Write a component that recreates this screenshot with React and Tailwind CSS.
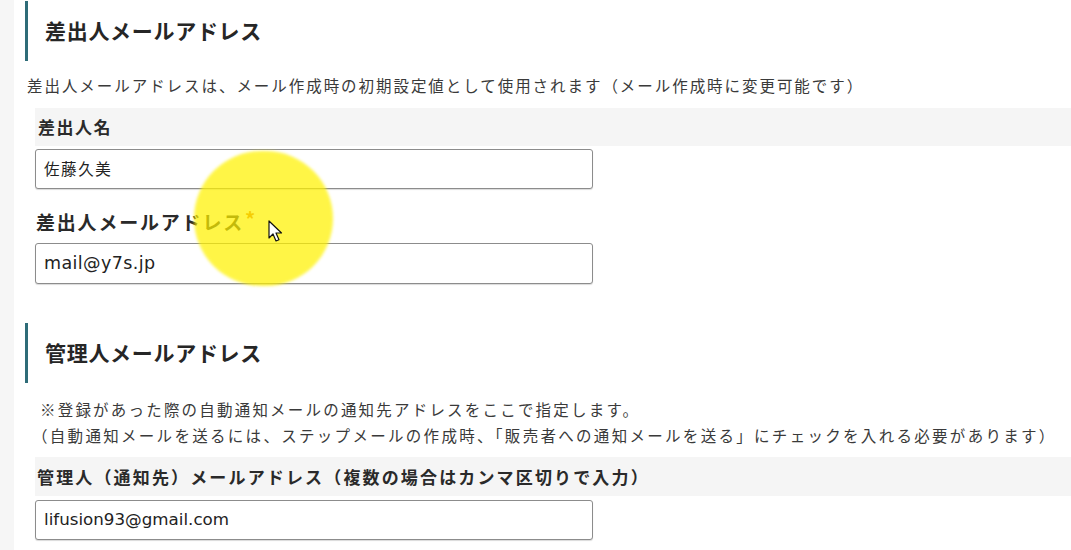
import React from 'react';

const jp = "font-['Noto_Sans_CJK_JP','Noto_Sans',sans-serif]";
const latin = "font-['DejaVu_Sans','Noto_Sans_CJK_JP',sans-serif]";

function SectionTitle({ children }) {
  return (
    <div className="flex items-center h-[60px] border-l-[3px] border-[#2e6c78] pl-[17px]">
      <h2 className="text-[21px] font-bold tracking-[0.7px] text-[#262626]">{children}</h2>
    </div>
  );
}

function TextField({ value, className = '' }) {
  return (
    <div className={`ml-[10px] w-[558px] h-[40px] flex items-center px-[8px] border border-[#8c8c8c] rounded-[3px] bg-white shadow-[0_1px_1px_rgba(0,0,0,0.15)] ${className}`}>
      <span className="text-[#222]">{value}</span>
    </div>
  );
}

export default function App() {
  return (
    <div className={`relative flex w-full h-[550px] bg-white overflow-hidden ${jp}`}>
      {/* left gutter */}
      <div className="w-[14px] bg-[#f6f6f6]" />

      <div className="flex-1 pl-[11px] flex flex-col">
        {/* 差出人メールアドレス */}
        <div className="pt-[1px]">
          <SectionTitle>差出人メールアドレス</SectionTitle>
        </div>
        <p className="mt-[12px] ml-[2px] leading-[24px] text-[15.5px] tracking-[1.95px] text-[#3a3a3a]">
          差出人メールアドレスは、メール作成時の初期設定値として使用されます（メール作成時に変更可能です）
        </p>

        <div className="mt-[11px] ml-[10px] h-[38px] flex items-center pl-[3px] bg-[#f5f5f5]">
          <span className="text-[17px] font-bold tracking-[1.5px] text-[#2a2a2a]">差出人名</span>
        </div>
        <TextField value="佐藤久美" className="mt-[3px] text-[15.5px] tracking-[1.6px]" />

        <div className="mt-[14px] ml-[10px] h-[38px] flex items-center pl-[1px]">
          <span className="text-[19px] font-bold tracking-[1.8px] text-[#2a2a2a]">差出人メールアドレス</span>
          <span className="ml-[1px] -mt-[6px] text-[20px] font-bold text-[#e0700a]">*</span>
        </div>
        <TextField value="mail@y7s.jp" className={`mt-[2px] h-[41px] text-[17.5px] tracking-[0.4px] ${latin}`} />

        {/* 管理人メールアドレス */}
        <div className="mt-[39px]">
          <SectionTitle>管理人メールアドレス</SectionTitle>
        </div>
        <div className="mt-[13px] ml-[15px] text-[15.5px] leading-[26px] tracking-[2.2px] text-[#3a3a3a]">
          <p>※登録があった際の自動通知メールの通知先アドレスをここで指定します。</p>
          <p className="-ml-[8px] tracking-[2.3px]">（自動通知メールを送るには、ステップメールの作成時、「販売者への通知メールを送る」にチェックを入れる必要があります）</p>
        </div>

        <div className="mt-[9px] ml-[10px] h-[39px] flex items-center pl-[2px] bg-[#f5f5f5]">
          <span className="text-[17px] font-bold tracking-[2.15px] text-[#2a2a2a]">
            管理人（通知先）メールアドレス（複数の場合はカンマ区切りで入力）
          </span>
        </div>
        <TextField value="lifusion93@gmail.com" className={`mt-[4px] h-[39px] text-[16.7px] ${latin}`} />
      </div>

      {/* cursor highlight */}
      <div className="absolute left-[194px] top-[151px] w-[139px] h-[135px] rounded-full bg-[#fff200] opacity-[0.72] blur-[1.5px] pointer-events-none" />
      <svg className="absolute left-[268px] top-[220px] pointer-events-none" width="16" height="24" viewBox="0 0 16 24">
        <path d="M1 1 L1 18 L5 14 L8 21 L11 19.8 L8 13 L13.5 13 Z" fill="#fff" stroke="#111" strokeWidth="1.2" strokeLinejoin="round" />
      </svg>
    </div>
  );
}
